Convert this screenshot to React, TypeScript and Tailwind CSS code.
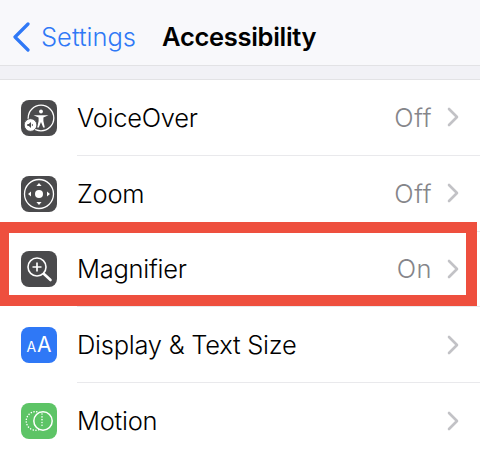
import React from 'react';

const font = "[font-family:Inter,'Noto_Sans',sans-serif]"

function VoiceOverIcon() {
  return (
    <svg viewBox="0 0 36 36" className="w-full h-full" fill="none">
      <circle cx="20" cy="18" r="12.8" stroke="white" strokeWidth="1.3" />
      <circle cx="20" cy="11.5" r="1.9" fill="white" />
      <path d="M12.5 15.2 L27.5 15.2 L22.4 17.6 L22.4 21 L23.8 27.5 L22.2 27.5 L20 22 L17.8 27.5 L16.2 27.5 L17.6 21 L17.6 17.6 Z" fill="white" />
      <circle cx="9.5" cy="25" r="6.3" fill="white" stroke="#4a4a4c" strokeWidth="0.8" />
      <path d="M6.3 23.9 H7.8 L10 22 V28 L7.8 26.1 H6.3 Z" fill="#4a4a4c" />
      <path d="M11.1 23.9 Q12.2 25 11.1 26.1" stroke="#4a4a4c" strokeWidth="0.8" />
    </svg>
  )
}

function ZoomIcon() {
  return (
    <svg viewBox="0 0 36 36" className="w-full h-full" fill="none">
      <circle cx="18" cy="18" r="14.5" stroke="white" strokeWidth="1.3" />
      <circle cx="18" cy="18" r="4" fill="white" />
      <path d="M18 7 L20.6 10 H15.4 Z M18 29 L20.6 26 H15.4 Z M7 18 L10 15.4 V20.6 Z M29 18 L26 15.4 V20.6 Z" fill="white" />
    </svg>
  )
}

function MagnifierIcon() {
  return (
    <svg viewBox="0 0 36 36" className="w-full h-full" fill="none" stroke="white">
      <circle cx="16" cy="16" r="9" strokeWidth="1.6" />
      <path d="M16 11.5 V20.5 M11.5 16 H20.5" strokeWidth="1.7" />
      <path d="M23 23 L29.5 29" strokeWidth="2.6" strokeLinecap="round" />
    </svg>
  )
}

function TextSizeIcon() {
  return (
    <div className={`flex items-baseline justify-center gap-[1px] w-full h-full pt-[6px] text-white ${font}`}>
      <span className="text-[14px] leading-[24px]">A</span>
      <span className="text-[21px] leading-[24px]">A</span>
    </div>
  )
}

function MotionIcon() {
  return (
    <svg viewBox="0 0 36 36" className="w-full h-full" fill="none" stroke="white">
      <circle cx="14.5" cy="18" r="9.3" strokeWidth="1.5" strokeDasharray="0.1 2.7" strokeLinecap="round" />
      <circle cx="22" cy="18" r="9.2" strokeWidth="1.5" fill="#5dc466" />
      <path d="M21 11 V25" strokeWidth="1.5" strokeDasharray="0.1 2.7" strokeLinecap="round" />
    </svg>
  )
}

const rows = [
  { label: "VoiceOver", value: "Off", bg: "bg-[#4a4a4c]", icon: <VoiceOverIcon /> },
  { label: "Zoom", value: "Off", bg: "bg-[#4a4a4c]", icon: <ZoomIcon /> },
  { label: "Magnifier", value: "On", bg: "bg-[#4a4a4c]", icon: <MagnifierIcon /> },
  { label: "Display & Text Size", value: "", bg: "bg-[#2f78f6]", icon: <TextSizeIcon /> },
  { label: "Motion", value: "", bg: "bg-[#5dc466]", icon: <MotionIcon /> },
]

export default function App() {
  return (
    <div className={`relative w-[480px] h-[456px] overflow-hidden bg-white text-black ${font}`}>
      <div className="flex items-center h-[66px] pt-[9px] bg-[#f8f8fb] border-b border-[#e2e2e5]">
        <svg viewBox="0 0 18 30" className="w-[18px] h-[30px] ml-[12px]" fill="none" stroke="#2f78f6" strokeWidth="3.2" strokeLinecap="round" strokeLinejoin="round">
          <path d="M16 2 L3 15 L16 28" />
        </svg>
        <span className="ml-[11px] text-[25.5px] font-[350] tracking-[0px] text-[#2f78f6]">Settings</span>
        <span className="ml-[26px] text-[25.5px] tracking-[-0.3px] font-semibold">Accessibility</span>
      </div>
      <div className="h-[14px] bg-[#f1f1f6] border-b border-[#e2e2e5]" />
      {rows.map((row) => (
        <div key={row.label} className="flex items-center h-[75.8px] pl-[21px]">
          <div className={`w-[36px] h-[36px] shrink-0 rounded-[8px] overflow-hidden ${row.bg}`}>{row.icon}</div>
          <div className="flex items-center h-full flex-1 ml-[20px] pr-[21px] border-b border-[#e9e9ec]">
            <span className="flex-1 pt-[1px] text-[25.5px] font-[350] tracking-[-0.25px]">{row.label}</span>
            <span className="pt-[1px] text-[25.5px] font-[350] tracking-[0.5px] text-[#85858a]">{row.value}</span>
            <svg viewBox="0 0 12 20" className="w-[12px] h-[20px] ml-[15px]" fill="none" stroke="#c2c2c6" strokeWidth="2.6" strokeLinecap="round" strokeLinejoin="round">
              <path d="M2 2 L10 10 L2 18" />
            </svg>
          </div>
        </div>
      ))}
      <div className="absolute left-[-2px] top-[222px] w-[479px] h-[84px] border-[11px] border-[#ee4f3e]" />
    </div>
  )
}
